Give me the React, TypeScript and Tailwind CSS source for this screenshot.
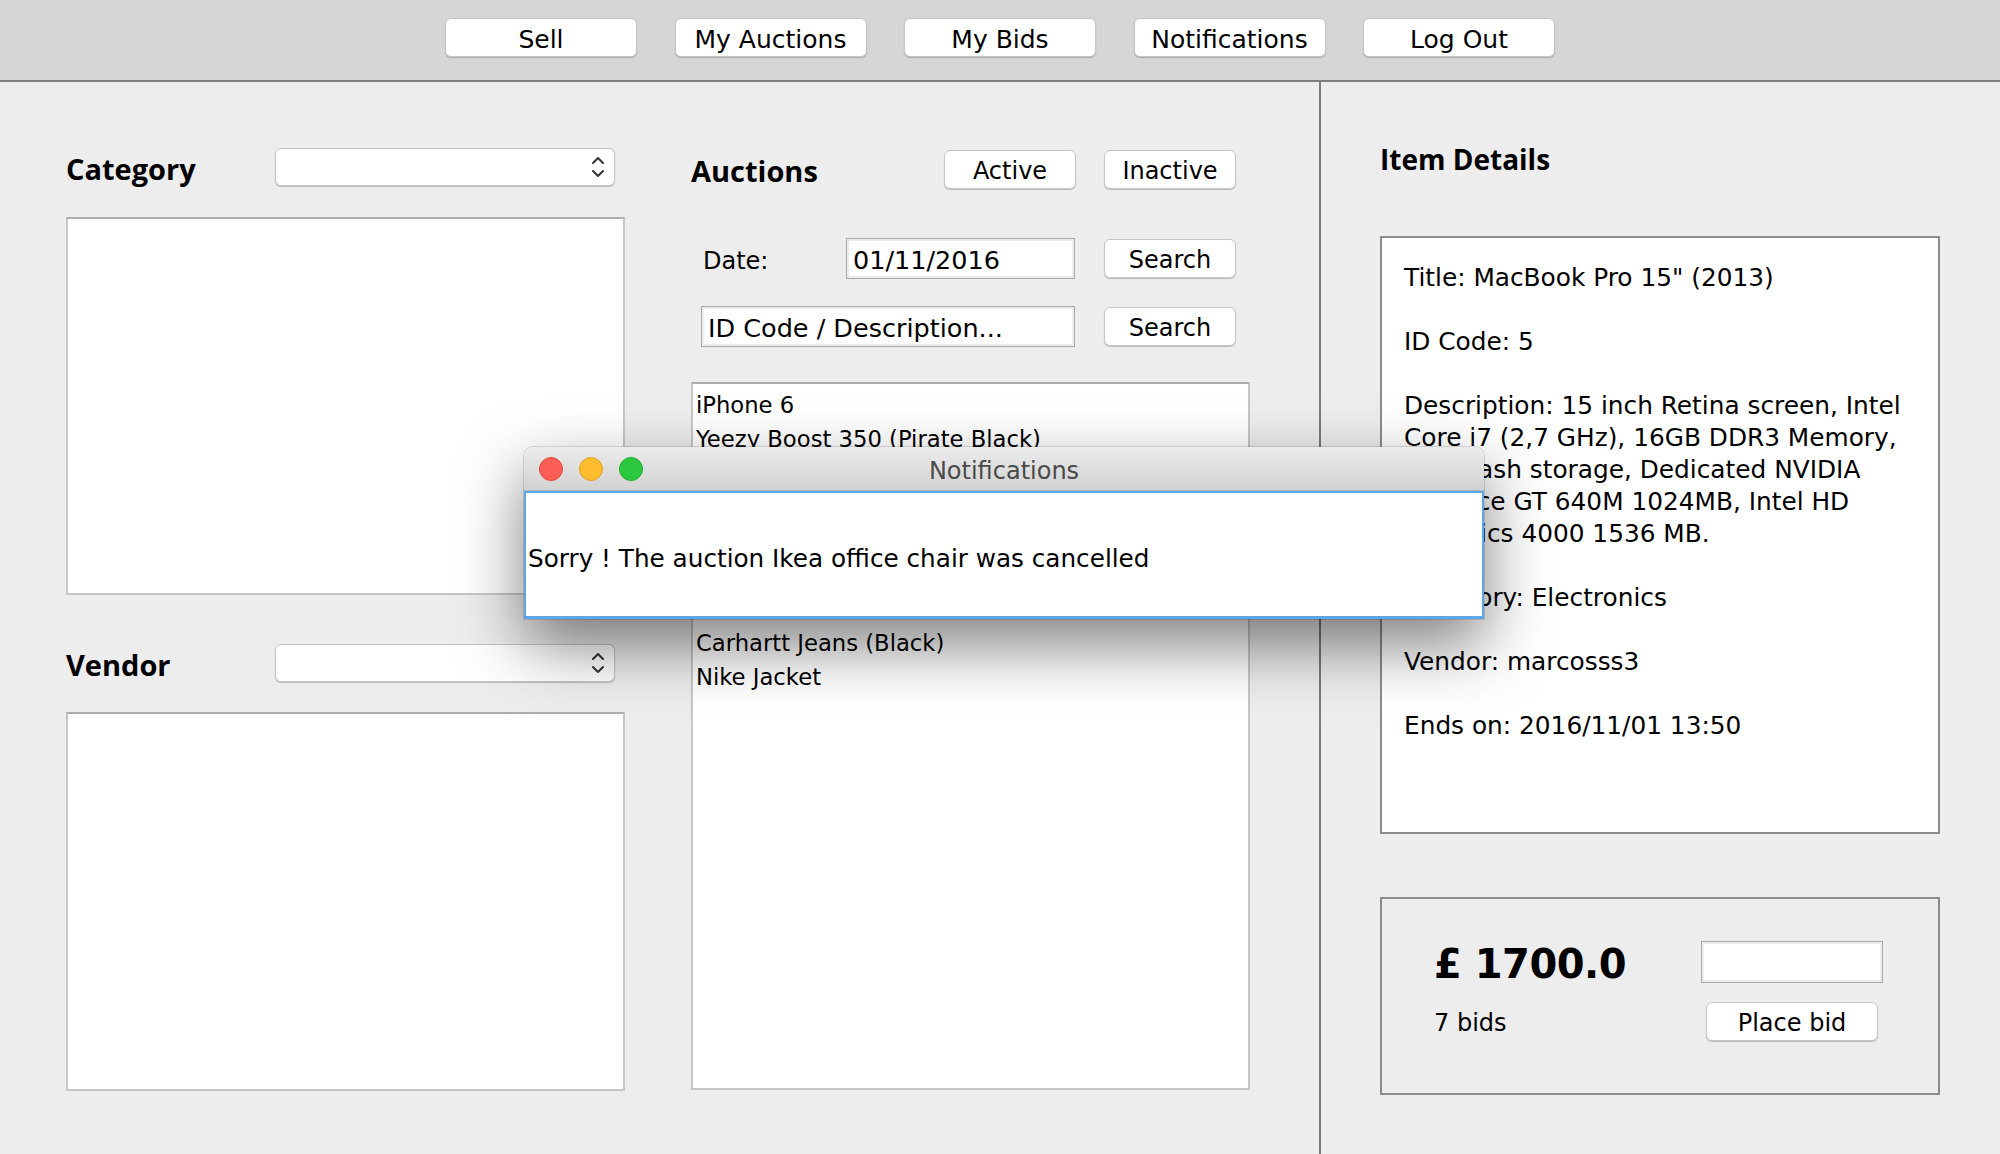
import React from "react";

interface MacButtonProps {
  label: string;
  className?: string;
}

function MacButton({ label, className = "" }: MacButtonProps) {
  return (
    <button
      type="button"
      className={`h-[39px] pt-[3px] bg-white rounded-[6px] border border-[#c6c6c6] shadow-[0_1px_1px_rgba(0,0,0,0.22)] text-black leading-none ${className}`}
    >
      {label}
    </button>
  );
}

function ComboBox() {
  return (
    <div className="w-[340px] h-[38px] bg-white rounded-[6px] border border-[#c4c4c4] shadow-[0_1px_1px_rgba(0,0,0,0.2)] flex items-center justify-end pr-[8px]">
      <svg width="16" height="26" viewBox="0 0 16 26" fill="none">
        <path d="M3 9 L8 4 L13 9" stroke="#333" strokeWidth="2" strokeLinecap="round" strokeLinejoin="round" />
        <path d="M3 17 L8 22 L13 17" stroke="#333" strokeWidth="2" strokeLinecap="round" strokeLinejoin="round" />
      </svg>
    </div>
  );
}

// rows 2..6 sit under the notification window
const auctionItems = [
  "iPhone 6",
  "Yeezy Boost 350 (Pirate Black)",
  "",
  "",
  "",
  "",
  "",
  "Carhartt Jeans (Black)",
  "Nike Jacket",
];

// blank strings are the empty lines between fields
const detailLines = [
  "Title: MacBook Pro 15\" (2013)",
  "",
  "ID Code: 5",
  "",
  "Description: 15 inch Retina screen, Intel",
  "Core i7 (2,7 GHz), 16GB DDR3 Memory,",
  "SSD flash storage, Dedicated NVIDIA",
  "GeForce GT 640M 1024MB, Intel HD",
  "Graphics 4000 1536 MB.",
  "",
  "Category: Electronics",
  "",
  "Vendor: marcosss3",
  "",
  "Ends on: 2016/11/01 13:50",
];

const navItems = ["Sell", "My Auctions", "My Bids", "Notifications", "Log Out"];

export default function App() {
  return (
    <div className="relative w-[2000px] h-[1154px] overflow-hidden bg-[#ededed] flex flex-col font-['DejaVu_Sans',sans-serif] text-black">
      {/* top toolbar */}
      <div className="h-[82px] shrink-0 bg-[#d6d6d6] border-b-2 border-[#7f7f7f] flex justify-center gap-[37.5px] pt-[18px]">
        {navItems.map((item) => (
          <MacButton key={item} label={item} className="w-[192px] text-[25px]" />
        ))}
      </div>

      <div className="flex-1 flex">
        {/* left part: filters + auctions */}
        <div className="w-[1319px] flex pl-[66px]">
          <div className="w-[559px] flex flex-col pt-[66px]">
            <div className="flex items-center h-[38px]">
              <span className="w-[209px] pt-[3px] font-['Open_Sans',sans-serif] font-bold text-[29px]">Category</span>
              <ComboBox />
            </div>
            <div className="mt-[31px] h-[378px] bg-white border-2 border-[#c6c6c6] border-t-[#adadad]" />
            <div className="mt-[49px] flex items-center h-[38px]">
              <span className="w-[209px] pt-[3px] font-['Open_Sans',sans-serif] font-bold text-[29px]">Vendor</span>
              <ComboBox />
            </div>
            <div className="mt-[30px] h-[379px] bg-white border-2 border-[#c6c6c6] border-t-[#adadad]" />
          </div>

          <div className="ml-[66px] w-[559px] flex flex-col pt-[68px]">
            <div className="flex items-center h-[39px]">
              <span className="w-[253px] pt-[2px] font-['Open_Sans',sans-serif] font-bold text-[29px]">Auctions</span>
              <MacButton label="Active" className="w-[132px] text-[24px]" />
              <MacButton label="Inactive" className="ml-[28px] w-[132px] text-[24px]" />
            </div>
            <div className="mt-[49px] flex items-center h-[41px]">
              <span className="w-[155px] pl-[12px] pt-[4px] text-[24px]">Date:</span>
              <div className="w-[229px] h-[41px] bg-white border border-[#a9a9a9] shadow-[inset_0_0_0_2px_#ececec] flex items-center pl-[6px] pt-[4px] text-[25.5px]">
                01/11/2016
              </div>
              <MacButton label="Search" className="ml-[29px] w-[132px] text-[24px]" />
            </div>
            <div className="mt-[27px] flex items-center h-[41px]">
              <div className="ml-[10px] w-[374px] h-[41px] bg-white border border-[#a9a9a9] shadow-[inset_0_0_0_2px_#ececec] flex items-center pl-[6px] pt-[4px] text-[25.5px]">
                ID Code / Description...
              </div>
              <MacButton label="Search" className="ml-[29px] w-[132px] text-[24px]" />
            </div>
            <div className="mt-[35px] h-[708px] bg-white border-2 border-[#c6c6c6] border-t-[#adadad] pt-[4px] pl-[3px]">
              {auctionItems.map((item, i) => (
                <div key={i} className="h-[34px] leading-[34px] text-[22.7px] whitespace-nowrap">
                  {item}
                </div>
              ))}
            </div>
          </div>
        </div>

        <div className="w-[2px] bg-[#7a7a7a]" />

        {/* right part: item details */}
        <div className="flex-1 flex flex-col pl-[59px] pt-[57px]">
          <div className="h-[40px] leading-[40px] font-['Open_Sans',sans-serif] font-bold text-[28px]">Item Details</div>
          <div className="mt-[57px] w-[560px] h-[598px] bg-white border-2 border-[#8c8c8c] pt-[24px] pl-[22px]">
            {detailLines.map((line, i) => (
              <div key={i} className="h-[32px] leading-[32px] text-[24.8px] whitespace-nowrap">
                {line}
              </div>
            ))}
          </div>
          <div className="mt-[63px] w-[560px] h-[198px] border-2 border-[#8c8c8c] pl-[52px] pt-[42px]">
            <div className="grid grid-cols-[267px_182px] grid-rows-[42px_39px] gap-y-[19px] items-center">
              <div className="pt-[3px] font-bold text-[40px] leading-none tracking-[-0.5px]">£ 1700.0</div>
              <div className="h-[42px] bg-white border border-[#a9a9a9] shadow-[inset_0_0_0_2px_#ececec]" />
              <div className="pt-[3px] text-[24px]">7 bids</div>
              <div className="flex justify-center">
                <MacButton label="Place bid" className="w-[172px] text-[24px]" />
              </div>
            </div>
          </div>
        </div>
      </div>

      {/* notification window on top */}
      <div className="absolute left-[524px] top-[447px] w-[960px] rounded-t-[9px] shadow-[0_26px_64px_rgba(0,0,0,0.5),0_0_0_1px_rgba(0,0,0,0.12)]">
        <div className="relative h-[44px] rounded-t-[9px] bg-gradient-to-b from-[#ebebeb] to-[#d2d2d2] border-b border-[#b4b4b4] flex items-center justify-center pt-[4px]">
          <div className="absolute left-[15px] top-[10px] flex gap-[16px]">
            <span className="w-[24px] h-[24px] rounded-full bg-[#fd5f57] border border-[#e2463f]" />
            <span className="w-[24px] h-[24px] rounded-full bg-[#febc2e] border border-[#dfa123]" />
            <span className="w-[24px] h-[24px] rounded-full bg-[#2bc840] border border-[#1dad2b]" />
          </div>
          <span className="text-[24px] text-[#4a4a4a]">Notifications</span>
        </div>
        <div className="h-[128px] bg-white border-2 border-b-[3px] border-[#5ea6ea] flex items-center pl-[2px] pt-[8px] text-[24.7px] whitespace-nowrap">
          Sorry ! The auction Ikea office chair was cancelled
        </div>
      </div>
    </div>
  );
}
